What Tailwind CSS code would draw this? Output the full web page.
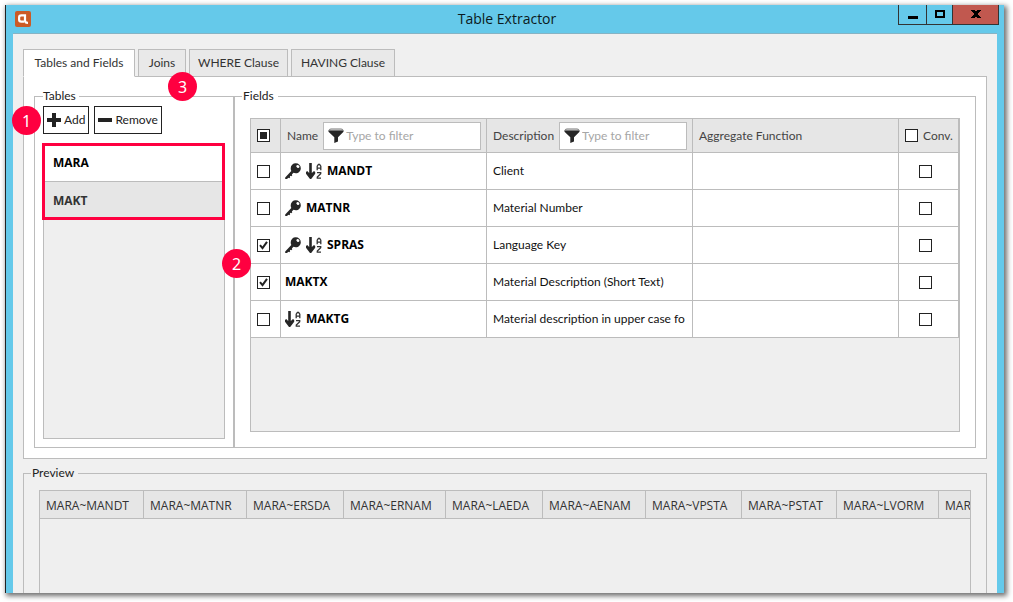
<!DOCTYPE html>
<html lang="en">
<head>
<meta charset="utf-8">
<meta name="viewport" content="width=device-width, initial-scale=1">
<title>Table Extractor</title>
<script src="https://cdn.jsdelivr.net/npm/@tailwindcss/browser@4"></script>
</head>
<body class="h-screen overflow-hidden bg-white pt-[5px] pr-[9px] pb-[9px] pl-[5px] font-['Lato','Open_Sans',sans-serif] text-xs text-[#222]">

<svg class="hidden" aria-hidden="true">
  <symbol id="key" viewBox="0 0 16 16"><path fill="#262626" fill-rule="evenodd" d="M10.800 0.200a5 5 0 0 1 5 5c0 2.900-2.200 5-5 5-.9 0-1.600-.2-2.300-.5L6.800 11.400l.5.8-1 1-.8-.5-.7.700.4.9-.9.9-.9-.5L2 16H.2v-1.600L6.300 8c-.4-.8-.6-1.700-.6-2.700a5 5 0 0 1 5.100-5.100zM11.900 2.300a1.600 1.300 35 1 0 2.400 2 1.600 1.300 35 0 0-2.400-2z"/></symbol>
  <symbol id="sort" viewBox="0 0 16 16"><path fill="#262626" d="M3.200 0h2.600v10L8 7.900l1.200 1.200v1.700L5.200 16H4L0 10.800V9.100l1.200-1.200 2 2.100z"/><path fill="none" stroke="#333" stroke-width="1.300" d="M11.200 7.300V3.200l1.200-1.700h1.200l1.200 1.700v4.100M11.200 5.200h3.600M11 9.700h3.700v1L11.300 14v1.200H15"/></symbol>
  <symbol id="funnel" viewBox="0 0 16 15"><path fill="#262626" d="M.5 2.200h15v1.500L10 9.300v4.300L6.300 15V9.300L.5 3.700z"/><path fill="#eee" stroke="#777" d="M1 2.500Q1 1 3 1h10q2 0 2 1.500z"/></symbol>
  <symbol id="tick" viewBox="0 0 13 13"><path fill="none" stroke="#222" stroke-width="2" d="M3 6.200l2.500 3L10 2.800"/></symbol>
</svg>

<div class="flex h-full flex-col border-l border-[#222] bg-[#65c9ea] shadow-[2px_2px_5px_1px_#00000090]">
  <header class="grid h-7 shrink-0 grid-cols-[1fr_auto_1fr] items-center pr-[5px] pl-[9px]">
    <svg class="size-4" viewBox="0 0 16 16" aria-hidden="true"><rect width="16" height="16" rx="2" fill="#cb5b26"/><path fill="none" stroke="#fff" stroke-width="2.200" d="M10 4.400H6.300A2.200 2.200 0 0 0 4.100 6.600v1.800a2.200 2.200 0 0 0 2.200 2.200H9M10 3.300v6.200c0 1.700.8 2.400 3 2.400"/></svg>
    <h1 class="font-['Open_Sans'] text-sm leading-5 text-[#0b1a20]">Table Extractor</h1>
    <div class="flex h-5 self-start justify-self-end border border-t-0 border-[#333]">
      <button class="grid w-7 place-items-center border-r border-[#333]" aria-label="Minimize"><svg class="h-3 w-3.5" viewBox="0 0 14 12"><path d="M2 7h10v3H2z"/></svg></button>
      <button class="grid w-[26px] place-items-center border-r border-[#333]" aria-label="Maximize"><svg class="h-3 w-3.5" viewBox="0 0 14 12"><path fill="none" stroke="#000" stroke-width="2" d="M3 2h8v6H3z"/></svg></button>
      <button class="grid w-[45px] place-items-center bg-[#c1584f]" aria-label="Close"><svg class="h-3 w-3.5" viewBox="0 0 14 12"><path d="M2 1h4v1h2V1h4v1h-1v1h-1v1H9v2h1v1h1v1h1v1H8V8H6v1H2V8h1V7h1V6h1V4H4V3H3V2H2z"/></svg></button>
    </div>
  </header>

  <main class="mr-[7px] ml-[7px] flex min-h-0 flex-1 flex-col border-t border-[#86b3c4] bg-[#f0f0f0] px-2.5 pt-[15px]">
    <nav class="relative z-10 -mb-px flex h-7 shrink-0 gap-[3px] text-[#333]" role="tablist">
      <button role="tab" aria-selected="true" class="w-28 border border-[#bcbcbc] border-b-white bg-white whitespace-nowrap">Tables and Fields</button>
      <button role="tab" class="relative w-12 border border-[#bcbcbc] bg-[#e9e9e9] whitespace-nowrap">Joins
        <span class="absolute top-[22px] left-[29px] grid size-[29px] place-items-center rounded-full bg-[#ff0040] font-['Noto_Sans'] text-base text-white">3</span>
      </button>
      <button role="tab" class="w-[99px] border border-[#bcbcbc] bg-[#e9e9e9] whitespace-nowrap">WHERE Clause</button>
      <button role="tab" class="w-[104px] border border-[#bcbcbc] bg-[#e9e9e9] whitespace-nowrap">HAVING Clause</button>
    </nav>

    <section class="flex shrink-0 border border-[#bcbcbc] bg-white px-2.5 pt-[11px] pb-2.5">
      <fieldset class="w-[200px] shrink-0 border border-[#bcbcbc] px-2 pb-2">
        <legend class="leading-4">Tables&nbsp;</legend>
        <div class="relative flex gap-[5px] pt-0.5">
          <button class="flex h-7 items-center gap-[3px] border border-[#222] px-[3px]"><svg class="size-3.5" viewBox="0 0 14 14" aria-hidden="true"><path fill="#222" d="M5 0h4v5h5v4H9v5H5V9H0V5h5z"/></svg>Add</button>
          <button class="flex h-7 items-center gap-[3px] border border-[#222] px-[3px]"><svg class="size-3.5" viewBox="0 0 14 14" aria-hidden="true"><path fill="#222" d="M0 5h14v4H0z"/></svg>Remove</button>
          <span class="absolute top-0.5 -left-[31px] grid size-[29px] place-items-center rounded-full bg-[#ff0040] font-['Noto_Sans'] text-base text-white">1</span>
        </div>
        <div class="relative mt-2.5 h-[295px] border border-[#bcbcbc] bg-[#efefef]">
          <ul class="font-['Open_Sans'] font-bold">
            <li class="flex h-[37px] items-center border-b border-[#bcbcbc] bg-white px-[9px] text-black">MARA</li>
            <li class="flex h-[37px] items-center bg-[#e6e6e6] px-[9px] text-[#333]">MAKT</li>
          </ul>
          <div class="absolute -top-0.5 -right-px -left-0.5 h-[77px] border-3 border-[#ff0040]"></div>
        </div>
      </fieldset>

      <fieldset class="relative flex min-w-0 flex-1 flex-col border border-[#bcbcbc] px-[15px] pb-[15px]">
        <legend class="-ml-2 px-px leading-4">Fields&nbsp;</legend>
        <span class="absolute top-[145px] -left-[13px] grid size-[29px] place-items-center rounded-full bg-[#ff0040] font-['Noto_Sans'] text-base text-white">2</span>
        <div class="mt-3.5 h-[314px] border border-[#bcbcbc] bg-[#efefef]">
          <table class="w-full table-fixed border-separate border-spacing-0">
            <colgroup><col class="w-[30px]"><col><col><col><col class="w-[60px]"></colgroup>
            <thead class="bg-[#e6e6e6] text-left text-[#444] [&_th]:h-[34px] [&_th]:border-r [&_th]:border-b [&_th]:border-[#bcbcbc] [&_th]:p-0 [&_th]:pl-1.5 [&_th]:font-normal">
              <tr>
                <th><span class="grid size-[13px]"><input type="checkbox" checked aria-label="Select all fields" class="size-[13px] appearance-none border border-[#222] bg-white [grid-area:1/1]"><span class="m-[3px] size-[7px] bg-[#222] [grid-area:1/1]"></span></span></th>
                <th><div class="flex items-center gap-[5px] pr-[5px]"><label for="fn">Name</label><span class="flex h-7 min-w-0 flex-1 items-center gap-0.5 border border-[#bcbcbc] bg-white pl-1"><svg class="h-[15px] w-4 shrink-0"><use href="#funnel"/></svg><input id="fn" type="text" placeholder="Type to filter" class="w-full min-w-0 outline-none placeholder:text-[#a6a6a6]"></span></div></th>
                <th><div class="flex items-center gap-[5px] pr-[5px]"><label for="fd">Description</label><span class="flex h-7 min-w-0 flex-1 items-center gap-0.5 border border-[#bcbcbc] bg-white pl-1"><svg class="h-[15px] w-4 shrink-0"><use href="#funnel"/></svg><input id="fd" type="text" placeholder="Type to filter" class="w-full min-w-0 outline-none placeholder:text-[#a6a6a6]"></span></div></th>
                <th>Aggregate Function</th>
                <th><label class="flex items-center gap-[5px]"><input type="checkbox" class="size-[13px] shrink-0 appearance-none border border-[#222] bg-white">Conv.</label></th>
              </tr>
            </thead>
            <tbody class="bg-white text-[#111] [&_td]:h-[37px] [&_td]:border-r [&_td]:border-b [&_td]:border-[#bcbcbc] [&_td]:p-0">
              <tr>
                <td><span class="ml-1.5 grid size-[13px]"><input type="checkbox" aria-label="Select MANDT" class="size-[13px] appearance-none border border-[#222] bg-white"></span></td>
                <td><div class="flex items-center gap-[5px] pl-1 font-['Open_Sans'] font-bold text-black"><svg class="size-4"><use href="#key"/></svg><svg class="size-4"><use href="#sort"/></svg>MANDT</div></td>
                <td><div class="mr-[5px] ml-1.5 overflow-hidden whitespace-nowrap">Client</div></td><td></td>
                <td><span class="ml-5 grid size-[13px]"><input type="checkbox" aria-label="Convert MANDT" class="size-[13px] appearance-none border border-[#222] bg-white"></span></td>
              </tr>
              <tr>
                <td><span class="ml-1.5 grid size-[13px]"><input type="checkbox" aria-label="Select MATNR" class="size-[13px] appearance-none border border-[#222] bg-white"></span></td>
                <td><div class="flex items-center gap-[5px] pl-1 font-['Open_Sans'] font-bold text-black"><svg class="size-4"><use href="#key"/></svg>MATNR</div></td>
                <td><div class="mr-[5px] ml-1.5 overflow-hidden whitespace-nowrap">Material Number</div></td><td></td>
                <td><span class="ml-5 grid size-[13px]"><input type="checkbox" aria-label="Convert MATNR" class="size-[13px] appearance-none border border-[#222] bg-white"></span></td>
              </tr>
              <tr>
                <td><span class="ml-1.5 grid size-[13px]"><input type="checkbox" checked aria-label="Select SPRAS" class="size-[13px] appearance-none border border-[#222] bg-white [grid-area:1/1]"><svg class="size-[13px] [grid-area:1/1]"><use href="#tick"/></svg></span></td>
                <td><div class="flex items-center gap-[5px] pl-1 font-['Open_Sans'] font-bold text-black"><svg class="size-4"><use href="#key"/></svg><svg class="size-4"><use href="#sort"/></svg>SPRAS</div></td>
                <td><div class="mr-[5px] ml-1.5 overflow-hidden whitespace-nowrap">Language Key</div></td><td></td>
                <td><span class="ml-5 grid size-[13px]"><input type="checkbox" aria-label="Convert SPRAS" class="size-[13px] appearance-none border border-[#222] bg-white"></span></td>
              </tr>
              <tr>
                <td><span class="ml-1.5 grid size-[13px]"><input type="checkbox" checked aria-label="Select MAKTX" class="size-[13px] appearance-none border border-[#222] bg-white [grid-area:1/1]"><svg class="size-[13px] [grid-area:1/1]"><use href="#tick"/></svg></span></td>
                <td><div class="flex items-center gap-[5px] pl-1 font-['Open_Sans'] font-bold text-black">MAKTX</div></td>
                <td><div class="mr-[5px] ml-1.5 overflow-hidden whitespace-nowrap">Material Description (Short Text)</div></td><td></td>
                <td><span class="ml-5 grid size-[13px]"><input type="checkbox" aria-label="Convert MAKTX" class="size-[13px] appearance-none border border-[#222] bg-white"></span></td>
              </tr>
              <tr>
                <td><span class="ml-1.5 grid size-[13px]"><input type="checkbox" aria-label="Select MAKTG" class="size-[13px] appearance-none border border-[#222] bg-white"></span></td>
                <td><div class="flex items-center gap-[5px] pl-1 font-['Open_Sans'] font-bold text-black"><svg class="size-4"><use href="#sort"/></svg>MAKTG</div></td>
                <td><div class="mr-[5px] ml-1.5 overflow-hidden whitespace-nowrap">Material description in upper case fo</div></td><td></td>
                <td><span class="ml-5 grid size-[13px]"><input type="checkbox" aria-label="Convert MAKTG" class="size-[13px] appearance-none border border-[#222] bg-white"></span></td>
              </tr>
            </tbody>
          </table>
        </div>
      </fieldset>
    </section>

    <fieldset class="mt-1.5 min-h-0 min-w-0 flex-1 overflow-hidden border border-b-0 border-[#bcbcbc] px-[15px]">
      <legend class="-ml-2 px-px leading-4">Preview&nbsp;</legend>
      <div class="mt-[9px] h-full overflow-hidden border border-b-0 border-[#bcbcbc] bg-[#efefef]">
        <table class="w-[1003px] table-fixed border-separate border-spacing-0 font-['Open_Sans']">
          <colgroup><col class="w-[104px]"><col class="w-[103px]"><col class="w-[97px]"><col class="w-[102px]"><col class="w-[97px]"><col class="w-[103px]"><col class="w-24"><col class="w-[95px]"><col class="w-[102px]"><col></colgroup>
          <thead class="bg-[#e6e6e6] text-left text-[#333] [&_th]:h-7 [&_th]:border-r [&_th]:border-b [&_th]:border-[#bcbcbc] [&_th]:p-0 [&_th]:pt-0.5 [&_th]:pl-1.5 [&_th]:font-normal [&_th]:whitespace-nowrap">
            <tr><th>MARA~MANDT</th><th>MARA~MATNR</th><th>MARA~ERSDA</th><th>MARA~ERNAM</th><th>MARA~LAEDA</th><th>MARA~AENAM</th><th>MARA~VPSTA</th><th>MARA~PSTAT</th><th>MARA~LVORM</th><th>MAR</th></tr>
          </thead>
        </table>
      </div>
    </fieldset>
  </main>
</div>
</body>
</html>
